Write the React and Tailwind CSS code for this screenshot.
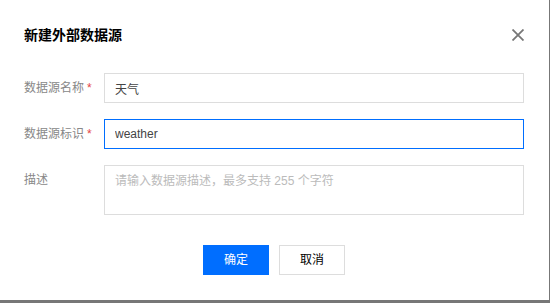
import React, { useState } from "react";

const font = { fontFamily: '"Liberation Sans", "Noto Sans CJK SC", sans-serif' };

// Close icon
function CloseIcon() {
  return (
    <svg width="12" height="12" viewBox="0 0 12 12" className="block">
      <path d="M0.5 0.5 L11.5 11.5 M11.5 0.5 L0.5 11.5" stroke="#777" strokeWidth="1.8" fill="none" />
    </svg>
  );
}

function Label({ children, required }) {
  return (
    <div className="w-[80px] shrink-0 text-[12px] text-[#888] leading-[30px]">
      {children}
      {required && <span className="text-[#e54545] ml-[3px]">*</span>}
    </div>
  );
}

export default function App() {
  const [name, setName] = useState("天气");
  const [ident, setIdent] = useState("weather");
  const [desc, setDesc] = useState("");

  return (
    <div className="w-[550px] h-[303px] bg-[#777] overflow-hidden" style={font}>
      <div className="w-[549px] h-[300px] bg-white pl-6 pr-[25px] pt-6">
        <div className="flex items-center justify-between h-[22px]">
          <h3 className="text-[14px] font-bold text-[#000]">新建外部数据源</h3>
          <button className="w-[12px] h-[12px]">
            <CloseIcon />
          </button>
        </div>

        <div className="mt-[27px] flex flex-col gap-4">
          <div className="flex">
            <Label required>数据源名称</Label>
            <input
              className="flex-1 h-[30px] border border-[#ddd] px-[10px] text-[12px] text-[#444] outline-none"
              value={name}
              onChange={e => setName(e.target.value)}
            />
          </div>
          <div className="flex">
            <Label required>数据源标识</Label>
            <input
              className="flex-1 h-[30px] border border-[#006eff] px-[10px] text-[12px] text-[#444] outline-none"
              value={ident}
              onChange={e => setIdent(e.target.value)}
            />
          </div>
          <div className="flex">
            <div className="w-[80px] shrink-0 text-[12px] text-[#888] leading-[18px] pt-[6px]">描述</div>
            <textarea
              className="flex-1 h-[50px] border border-[#ddd] px-[10px] pt-[6px] text-[12px] leading-[18px] text-[#444] placeholder:text-[#bbb] outline-none resize-none"
              placeholder="请输入数据源描述，最多支持 255 个字符"
              value={desc}
              onChange={e => setDesc(e.target.value)}
            />
          </div>
        </div>

        <div className="mt-[30px] flex justify-center gap-[10px]">
          <button className="w-[66px] h-[30px] bg-[#006eff] text-white text-[12px]">确定</button>
          <button className="w-[66px] h-[30px] border border-[#ddd] bg-white text-[#000] text-[12px]">取消</button>
        </div>
      </div>
    </div>
  );
}
